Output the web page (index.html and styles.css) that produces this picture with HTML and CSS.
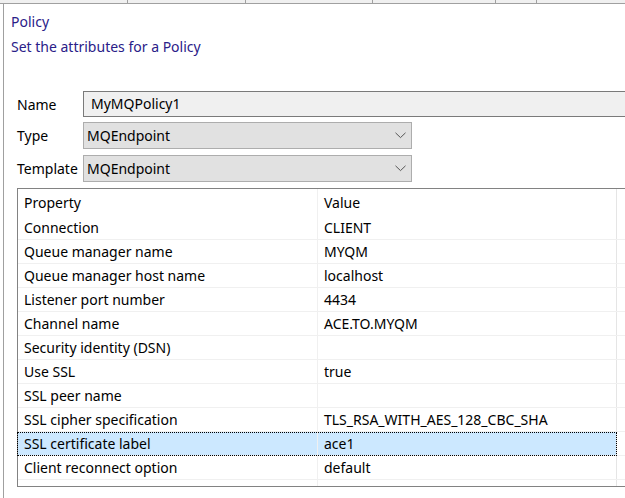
FILE: index.html
```html
<!DOCTYPE html>
<html>
<head>
<meta charset="utf-8">
<link rel="stylesheet" href="styles.css">
</head>
<body>
<div class="tabs">
  <div class="tab t1"></div>
  <div class="tab t2"></div>
  <div class="tab t3"></div>
  <div class="tab t4"></div>
  <div class="tab t5"></div>
</div>
<div class="page">
  <div class="title">Policy</div>
  <div class="desc">Set the attributes for a Policy</div>
  <div class="form">
    <div class="frow">
      <div class="label">Name</div>
      <div class="text-input">MyMQPolicy1</div>
    </div>
    <div class="frow combo-row">
      <div class="label">Type</div>
      <div class="combo"><span>MQEndpoint</span>
        <svg class="chev" width="11" height="7" viewBox="0 0 11 7"><path d="M0.5 0.8 L5.5 5.6 L10.5 0.8" fill="none" stroke="#555" stroke-width="1"/></svg>
      </div>
    </div>
    <div class="frow combo-row">
      <div class="label">Template</div>
      <div class="combo"><span>MQEndpoint</span>
        <svg class="chev" width="11" height="7" viewBox="0 0 11 7"><path d="M0.5 0.8 L5.5 5.6 L10.5 0.8" fill="none" stroke="#555" stroke-width="1"/></svg>
      </div>
    </div>
  </div>
  <div class="table">
    <div class="row head"><div class="c1">Property</div><div class="c2">Value</div><div class="c3"></div></div>
    <div class="row"><div class="c1">Connection</div><div class="c2">CLIENT</div><div class="c3"></div></div>
    <div class="row"><div class="c1">Queue manager name</div><div class="c2">MYQM</div><div class="c3"></div></div>
    <div class="row"><div class="c1">Queue manager host name</div><div class="c2">localhost</div><div class="c3"></div></div>
    <div class="row"><div class="c1">Listener port number</div><div class="c2">4434</div><div class="c3"></div></div>
    <div class="row"><div class="c1">Channel name</div><div class="c2">ACE.TO.MYQM</div><div class="c3"></div></div>
    <div class="row"><div class="c1">Security identity (DSN)</div><div class="c2"></div><div class="c3"></div></div>
    <div class="row"><div class="c1">Use SSL</div><div class="c2">true</div><div class="c3"></div></div>
    <div class="row"><div class="c1">SSL peer name</div><div class="c2"></div><div class="c3"></div></div>
    <div class="row"><div class="c1">SSL cipher specification</div><div class="c2">TLS_RSA_WITH_AES_128_CBC_SHA</div><div class="c3"></div></div>
    <div class="row selected"><div class="c1">SSL certificate label</div><div class="c2">ace1</div><div class="c3"></div></div>
    <div class="row"><div class="c1">Client reconnect option</div><div class="c2">default</div><div class="c3"></div></div>
    <div class="row filler"><div class="c1"></div><div class="c2"></div><div class="c3"></div></div>
  </div>
</div>
</body>
</html>
```
FILE: styles.css
```css
html, body {
  margin: 0;
  padding: 0;
  background: #ffffff;
}
body {
  font-family: "Noto Sans", "Open Sans", sans-serif;
  font-size: 14px;
  color: #000;
  width: 625px;
  height: 498px;
  overflow: hidden;
}
.tabs {
  display: flex;
  height: 3px;
  background: #f0f0f0;
  border-bottom: 1px solid #a0a0a0;
}
.tab {
  height: 3px;
  border-right: 1px solid #a0a0a0;
}
.t1 { width: 127px; }
.t2 { width: 117px; }
.t3 { width: 126px; }
.t4 { width: 122px; }
.t5 { width: 40px; }
.page {
  margin-left: 3px;
  border-left: 1px solid #a0a0a0;
  height: 494px;
  padding-top: 5px;
  box-sizing: border-box;
}
.title, .desc {
  color: #2a2088;
  line-height: 25px;
  padding-left: 7px;
  font-size: 14px;
}
.form {
  margin-top: 32px;
  padding-left: 13px;
}
.frow {
  display: flex;
  align-items: center;
  height: 26px;
  margin-bottom: 5px;
}
.combo-row {
  height: 27px;
  margin-bottom: 6px;
}
.label {
  width: 66px;
  flex: none;
}
.text-input {
  flex: 1;
  height: 26px;
  box-sizing: border-box;
  background: #f0f0f0;
  border: 1px solid #7a7a7a;
  border-right: none;
  padding-left: 7px;
  line-height: 24px;
}
.combo {
  width: 329px;
  height: 27px;
  box-sizing: border-box;
  background: #e1e1e1;
  border: 1px solid #adadad;
  padding-left: 3px;
  display: flex;
  align-items: center;
  justify-content: space-between;
  padding-right: 5px;
}
.chev {
  display: block;
}
.table {
  margin-top: 1px;
  margin-left: 13px;
  border: 1px solid #828282;
  border-right: none;
}
.row {
  display: flex;
  height: 24px;
  line-height: 24px;
  border-bottom: 1px solid #f0f0f0;
  box-sizing: border-box;
}
.row.head {
  height: 27px;
  line-height: 27px;
  border-bottom: none;
}
.c1 {
  width: 300px;
  flex: none;
  padding-left: 6px;
  box-sizing: border-box;
  border-right: 1px solid #f0f0f0;
}
.c2 {
  width: 299px;
  flex: none;
  padding-left: 6px;
  box-sizing: border-box;
  border-right: 1px solid #e5e5e5;
}
.c3 {
  flex: 1;
}
.row.selected {
  position: relative;
}
.row.selected .c1, .row.selected .c2 {
  background: #cce8ff;
}
.row.selected::after {
  content: "";
  position: absolute;
  left: -1px;
  top: 0;
  width: 600px;
  height: 24px;
  box-sizing: border-box;
  border: 1px dotted #000;
}
.row.filler {
  height: 6px;
  border-bottom: none;
}
```
